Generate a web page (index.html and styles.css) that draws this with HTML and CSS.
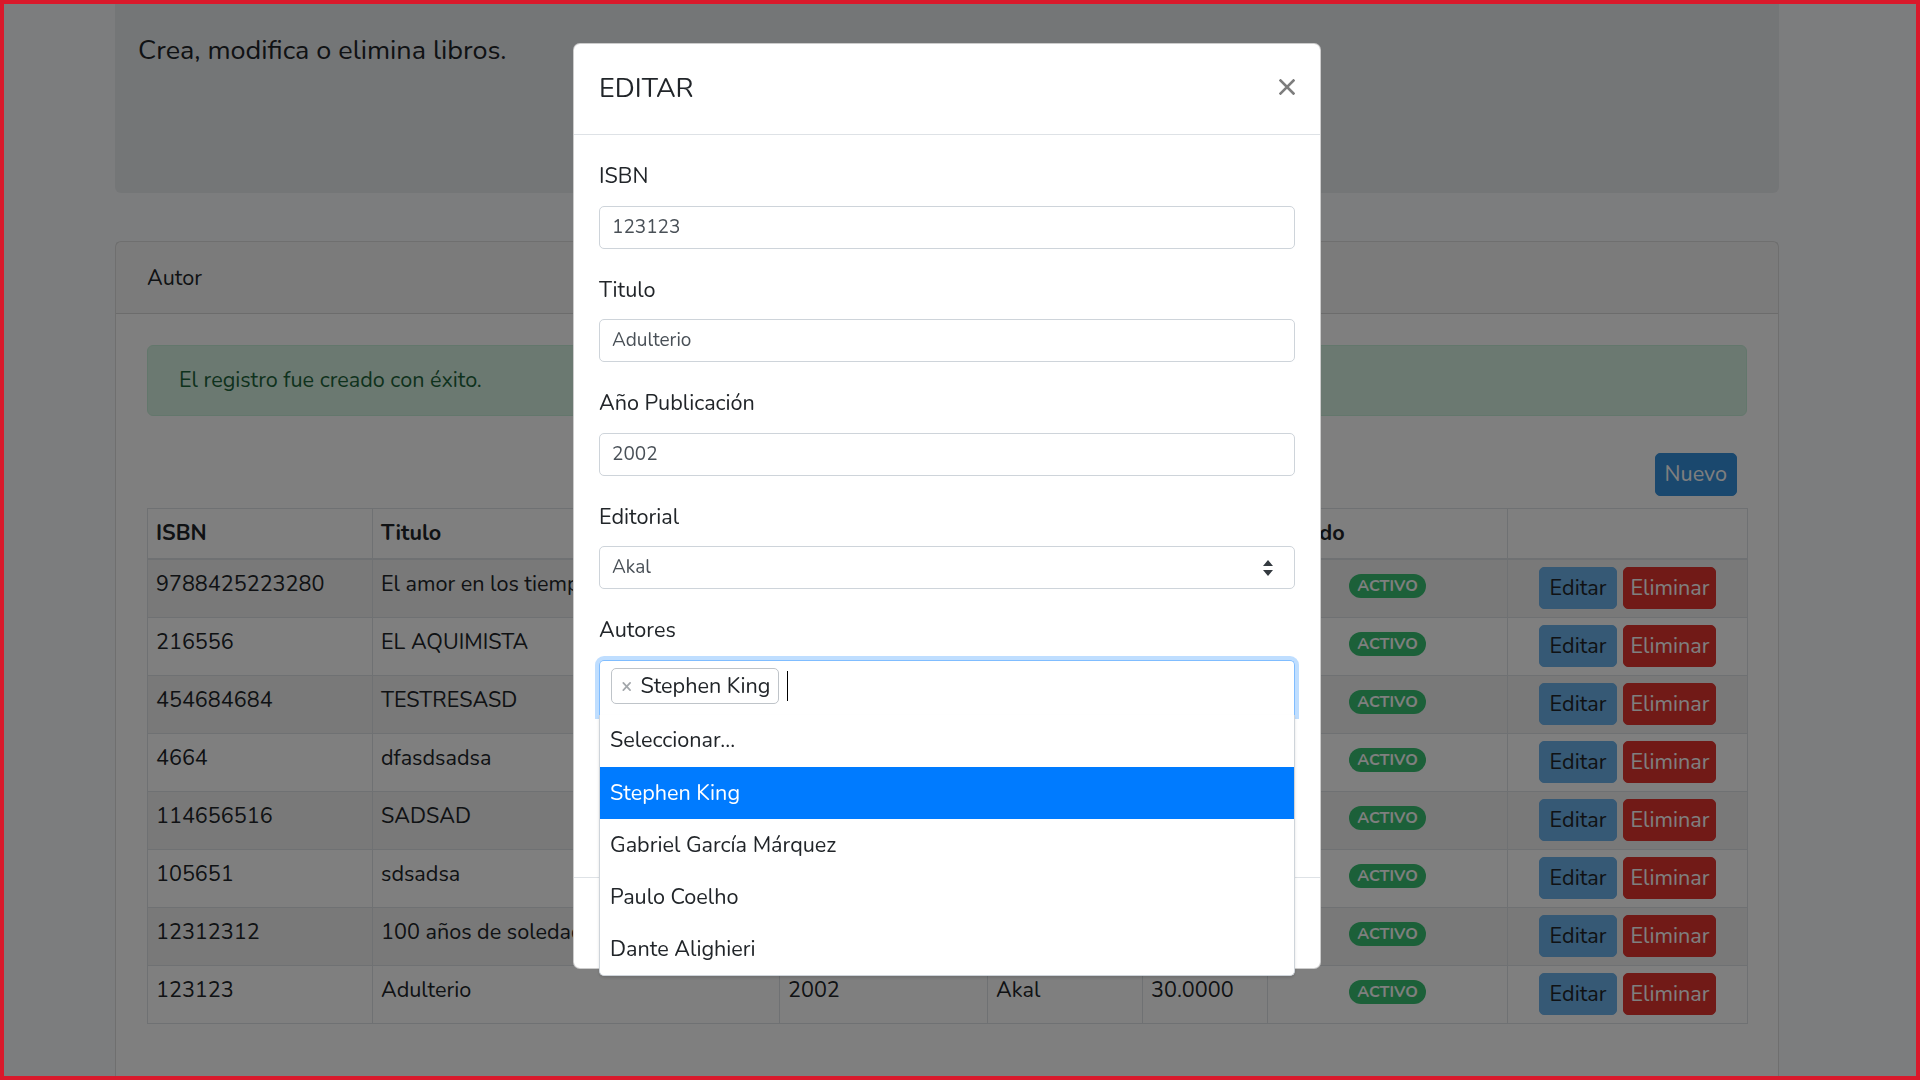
FILE: index.html
```html
<!DOCTYPE html>
<html lang="es">
<head>
<meta charset="utf-8">
<title>Libros</title>
<link rel="stylesheet" href="styles.css">
</head>
<body>
<div class="container">
  <div class="jumbotron">
    <p class="lead">Crea, modifica o elimina libros.</p>
  </div>
  <div class="card">
    <div class="card-header">Autor</div>
    <div class="card-body">
      <div class="alert">El registro fue creado con éxito.</div>
      <div class="toolbar"><button class="btn btn-primary">Nuevo</button></div>
      <table class="table">
        <colgroup>
          <col class="c-isbn"><col class="c-titulo"><col class="c-anio"><col class="c-edit"><col class="c-precio"><col class="c-estado"><col class="c-acc">
        </colgroup>
        <thead>
          <tr><th>ISBN</th><th>Titulo</th><th>Año</th><th>Editorial</th><th>Precio</th><th>Estado</th><th></th></tr>
        </thead>
        <tbody>
          <tr><td>9788425223280</td><td>El amor en los tiempos del cólera</td><td>1985</td><td>Debolsillo</td><td>25.0000</td><td class="center"><span class="badge">ACTIVO</span></td><td><div class="actions"><button class="btn btn-info">Editar</button><button class="btn btn-danger">Eliminar</button></div></td></tr>
          <tr><td>216556</td><td>EL AQUIMISTA</td><td>1988</td><td>Planeta</td><td>18.0000</td><td class="center"><span class="badge">ACTIVO</span></td><td><div class="actions"><button class="btn btn-info">Editar</button><button class="btn btn-danger">Eliminar</button></div></td></tr>
          <tr><td>454684684</td><td>TESTRESASD</td><td>2010</td><td>Akal</td><td>10.0000</td><td class="center"><span class="badge">ACTIVO</span></td><td><div class="actions"><button class="btn btn-info">Editar</button><button class="btn btn-danger">Eliminar</button></div></td></tr>
          <tr><td>4664</td><td>dfasdsadsa</td><td>2001</td><td>Akal</td><td>12.0000</td><td class="center"><span class="badge">ACTIVO</span></td><td><div class="actions"><button class="btn btn-info">Editar</button><button class="btn btn-danger">Eliminar</button></div></td></tr>
          <tr><td>114656516</td><td>SADSAD</td><td>2005</td><td>Planeta</td><td>15.0000</td><td class="center"><span class="badge">ACTIVO</span></td><td><div class="actions"><button class="btn btn-info">Editar</button><button class="btn btn-danger">Eliminar</button></div></td></tr>
          <tr><td>105651</td><td>sdsadsa</td><td>2003</td><td>Akal</td><td>20.0000</td><td class="center"><span class="badge">ACTIVO</span></td><td><div class="actions"><button class="btn btn-info">Editar</button><button class="btn btn-danger">Eliminar</button></div></td></tr>
          <tr><td>12312312</td><td>100 años de soledad</td><td>1967</td><td>Sudamericana</td><td>35.0000</td><td class="center"><span class="badge">ACTIVO</span></td><td><div class="actions"><button class="btn btn-info">Editar</button><button class="btn btn-danger">Eliminar</button></div></td></tr>
          <tr><td>123123</td><td>Adulterio</td><td>2002</td><td>Akal</td><td>30.0000</td><td class="center"><span class="badge">ACTIVO</span></td><td><div class="actions"><button class="btn btn-info">Editar</button><button class="btn btn-danger">Eliminar</button></div></td></tr>
        </tbody>
      </table>
    </div>
  </div>
</div>

<div class="backdrop"></div>

<div class="modal">
  <div class="modal-dialog">
    <div class="modal-header">
      <h5 class="modal-title">EDITAR</h5>
      <button class="close" aria-label="Cerrar">
        <svg width="16" height="16" viewBox="0 0 16 16"><path d="M1.5 1.5 L14.5 14.5 M14.5 1.5 L1.5 14.5" stroke="#7d7d7d" stroke-width="2.6" stroke-linecap="square"/></svg>
      </button>
    </div>
    <div class="modal-body">
      <div class="form-group">
        <label>ISBN</label>
        <div class="input">123123</div>
      </div>
      <div class="form-group">
        <label>Titulo</label>
        <div class="input">Adulterio</div>
      </div>
      <div class="form-group">
        <label>Año Publicación</label>
        <div class="input">2002</div>
      </div>
      <div class="form-group">
        <label>Editorial</label>
        <div class="input select">
          <span>Akal</span>
          <svg width="10" height="16" viewBox="0 0 10 16"><path d="M5 0 L10 6 L0 6 Z M0 10 L10 10 L5 16 Z" fill="#343a40"/></svg>
        </div>
      </div>
      <div class="form-group">
        <label>Autores</label>
        <div class="field">
          <div class="multi">
            <span class="tag"><span class="tag-x">×</span>Stephen King</span><span class="caret"></span>
          </div>
          <ul class="dropdown">
            <li>Seleccionar...</li>
            <li class="active">Stephen King</li>
            <li>Gabriel García Márquez</li>
            <li>Paulo Coelho</li>
            <li>Dante Alighieri</li>
          </ul>
        </div>
      </div>
      <div class="form-group">
        <label>Precio</label>
        <div class="input">30.0000</div>
      </div>
    </div>
    <div class="modal-footer">
      <button class="btn btn-secondary">Cerrar</button>
      <button class="btn btn-primary">Guardar</button>
    </div>
  </div>
</div>

<div class="frame"></div>
</body>
</html>
```

FILE: styles.css
```css
html, body {
  margin: 0;
  padding: 0;
}

body {
  width: 1894px;
  height: 1080px;
  overflow: hidden;
  background: #f8fafc;
  font-family: "Nunito", "Lato", "Noto Sans", sans-serif;
  font-size: 21.6px;
  line-height: 34.5px;
  color: #212529;
}

.container {
  width: 1664px;
  margin: 0 auto;
}

.jumbotron {
  height: 193px;
  box-sizing: border-box;
  padding: 29px 23px 0;
  background: #e9ecef;
  border-radius: 0 0 6px 6px;
}

.lead {
  margin: 0;
  font-size: 27px;
  line-height: 43px;
}

.card {
  margin-top: 48px;
  background: #fff;
  border: 1px solid rgba(0, 0, 0, 0.125);
  border-radius: 6px;
}

.card-header {
  padding: 18.5px 31px 17.5px;
  background: rgba(0, 0, 0, 0.03);
  border-bottom: 1px solid rgba(0, 0, 0, 0.125);
}

.card-body {
  padding: 31px 31px 80px;
}

.alert {
  padding: 17.75px 31px 16.75px;
  background: #d7f3e3;
  border: 1px solid #c7eed8;
  border-radius: 6px;
  color: #1d643b;
  margin-bottom: 37px;
}

.toolbar {
  display: flex;
  justify-content: flex-end;
  padding-right: 10px;
  margin-bottom: 12px;
}

.btn {
  height: 42px;
  padding: 0 10px;
  border: 1px solid transparent;
  border-radius: 5px;
  font: inherit;
  line-height: 40px;
  color: #fff;
  cursor: pointer;
}

.toolbar .btn {
  height: 43px;
  padding: 0 9px;
}

.btn.btn-primary {
  background: #3490dc;
  border-color: #3490dc;
  color: #fff;
}

.btn.btn-info {
  background: #6cb2eb;
  border-color: #6cb2eb;
  color: #212529;
}

.btn.btn-danger {
  background: #e3342f;
  border-color: #e3342f;
  color: #fff;
  padding: 0 6px;
}

.btn.btn-secondary {
  background: #6c757d;
  border-color: #6c757d;
  color: #fff;
}

.table {
  width: 1601px;
  border-collapse: collapse;
  table-layout: fixed;
}

.c-isbn { width: 225px; }
.c-titulo { width: 407px; }
.c-anio { width: 208px; }
.c-edit { width: 155px; }
.c-precio { width: 125px; }
.c-estado { width: 240px; }
.c-acc { width: 240px; }

.table th,
.table td {
  border: 1px solid #dee2e6;
  padding: 7px 8px 8px;
  text-align: left;
  vertical-align: top;
  white-space: nowrap;
  overflow: hidden;
}

.table th {
  font-weight: 700;
  border-bottom: 2px solid #dee2e6;
}

.table tbody tr:nth-child(odd) {
  background: rgba(0, 0, 0, 0.05);
}

.table td.center {
  text-align: center;
}

.badge {
  display: inline-block;
  padding: 4px 8px;
  font-size: 16px;
  line-height: 16px;
  font-weight: 700;
  color: #fff;
  background: #38c172;
  border-radius: 12px;
}

.actions {
  display: flex;
  justify-content: center;
  gap: 6px;
}

.backdrop {
  position: fixed;
  inset: 0;
  background: rgba(0, 0, 0, 0.5);
}

.modal {
  position: fixed;
  top: 0;
  left: 0;
  width: 1894px;
  height: 1080px;
}

.modal-dialog {
  width: 748px;
  box-sizing: border-box;
  margin: 43px auto 0;
  background: #fff;
  border: 1px solid rgba(0, 0, 0, 0.2);
  border-radius: 7px;
}

.modal-header {
  display: flex;
  align-items: center;
  justify-content: space-between;
  padding: 29px 25px 29px;
  border-bottom: 1px solid #dee2e6;
}

.modal-title {
  margin: 0;
  font-size: 27px;
  line-height: 32.4px;
  font-weight: 400;
}

.close {
  display: flex;
  padding: 0;
  margin: 0 0 5px;
  border: 0;
  background: none;
}

.modal-body {
  padding: 23px 25px 26px;
}

.form-group {
  margin-bottom: 23px;
}

.form-group label {
  display: block;
  padding-top: 1px;
  margin-bottom: 12px;
}

.input {
  height: 43px;
  box-sizing: border-box;
  padding: 0 12px;
  border: 1px solid #ced4da;
  border-radius: 5px;
  font-size: 19px;
  line-height: 41px;
  color: #495057;
}

.select {
  display: flex;
  align-items: center;
  justify-content: space-between;
  padding-right: 21px;
}

.field {
  position: relative;
}

.multi {
  height: 55px;
  box-sizing: border-box;
  padding: 7px 11px;
  display: flex;
  align-items: flex-start;
  border: 1px solid #80bdff;
  border-bottom: 0;
  border-radius: 5px 5px 0 0;
  box-shadow: 0 0 0 4px rgba(0, 123, 255, 0.25);
}

.tag {
  display: inline-flex;
  align-items: center;
  height: 36px;
  box-sizing: border-box;
  padding: 0 8px 0 9px;
  border: 1px solid #bfc4c9;
  border-radius: 5px;
  line-height: 34px;
  color: #212529;
}

.tag-x {
  color: #a3a7ab;
  font-weight: 700;
  font-size: 19px;
  margin-right: 8px;
}

.caret {
  display: inline-block;
  width: 1px;
  height: 30px;
  margin: 3px 0 0 8px;
  background: #000;
}

.dropdown {
  position: absolute;
  top: 55px;
  left: 0;
  right: 0;
  margin: 0;
  padding: 0;
  list-style: none;
  background: #fff;
  border: 1px solid #ced4da;
  border-top: 0;
  border-radius: 0 0 5px 5px;
  box-shadow: 0 2px 3px rgba(0, 0, 0, 0.12);
  z-index: 2;
}

.dropdown li {
  padding: 8.75px 10px;
  color: #212529;
}

.dropdown li:first-child {
  padding-top: 8px;
  padding-bottom: 9.5px;
}

.dropdown li.active {
  background: #007bff;
  color: #fff;
}

.modal-footer {
  height: 91px;
  box-sizing: border-box;
  display: flex;
  align-items: center;
  justify-content: flex-end;
  gap: 6px;
  padding: 0 25px;
  border-top: 1px solid #dee2e6;
}

.frame {
  position: fixed;
  inset: 0;
  border: 4px solid #d9192b;
  pointer-events: none;
}
```
